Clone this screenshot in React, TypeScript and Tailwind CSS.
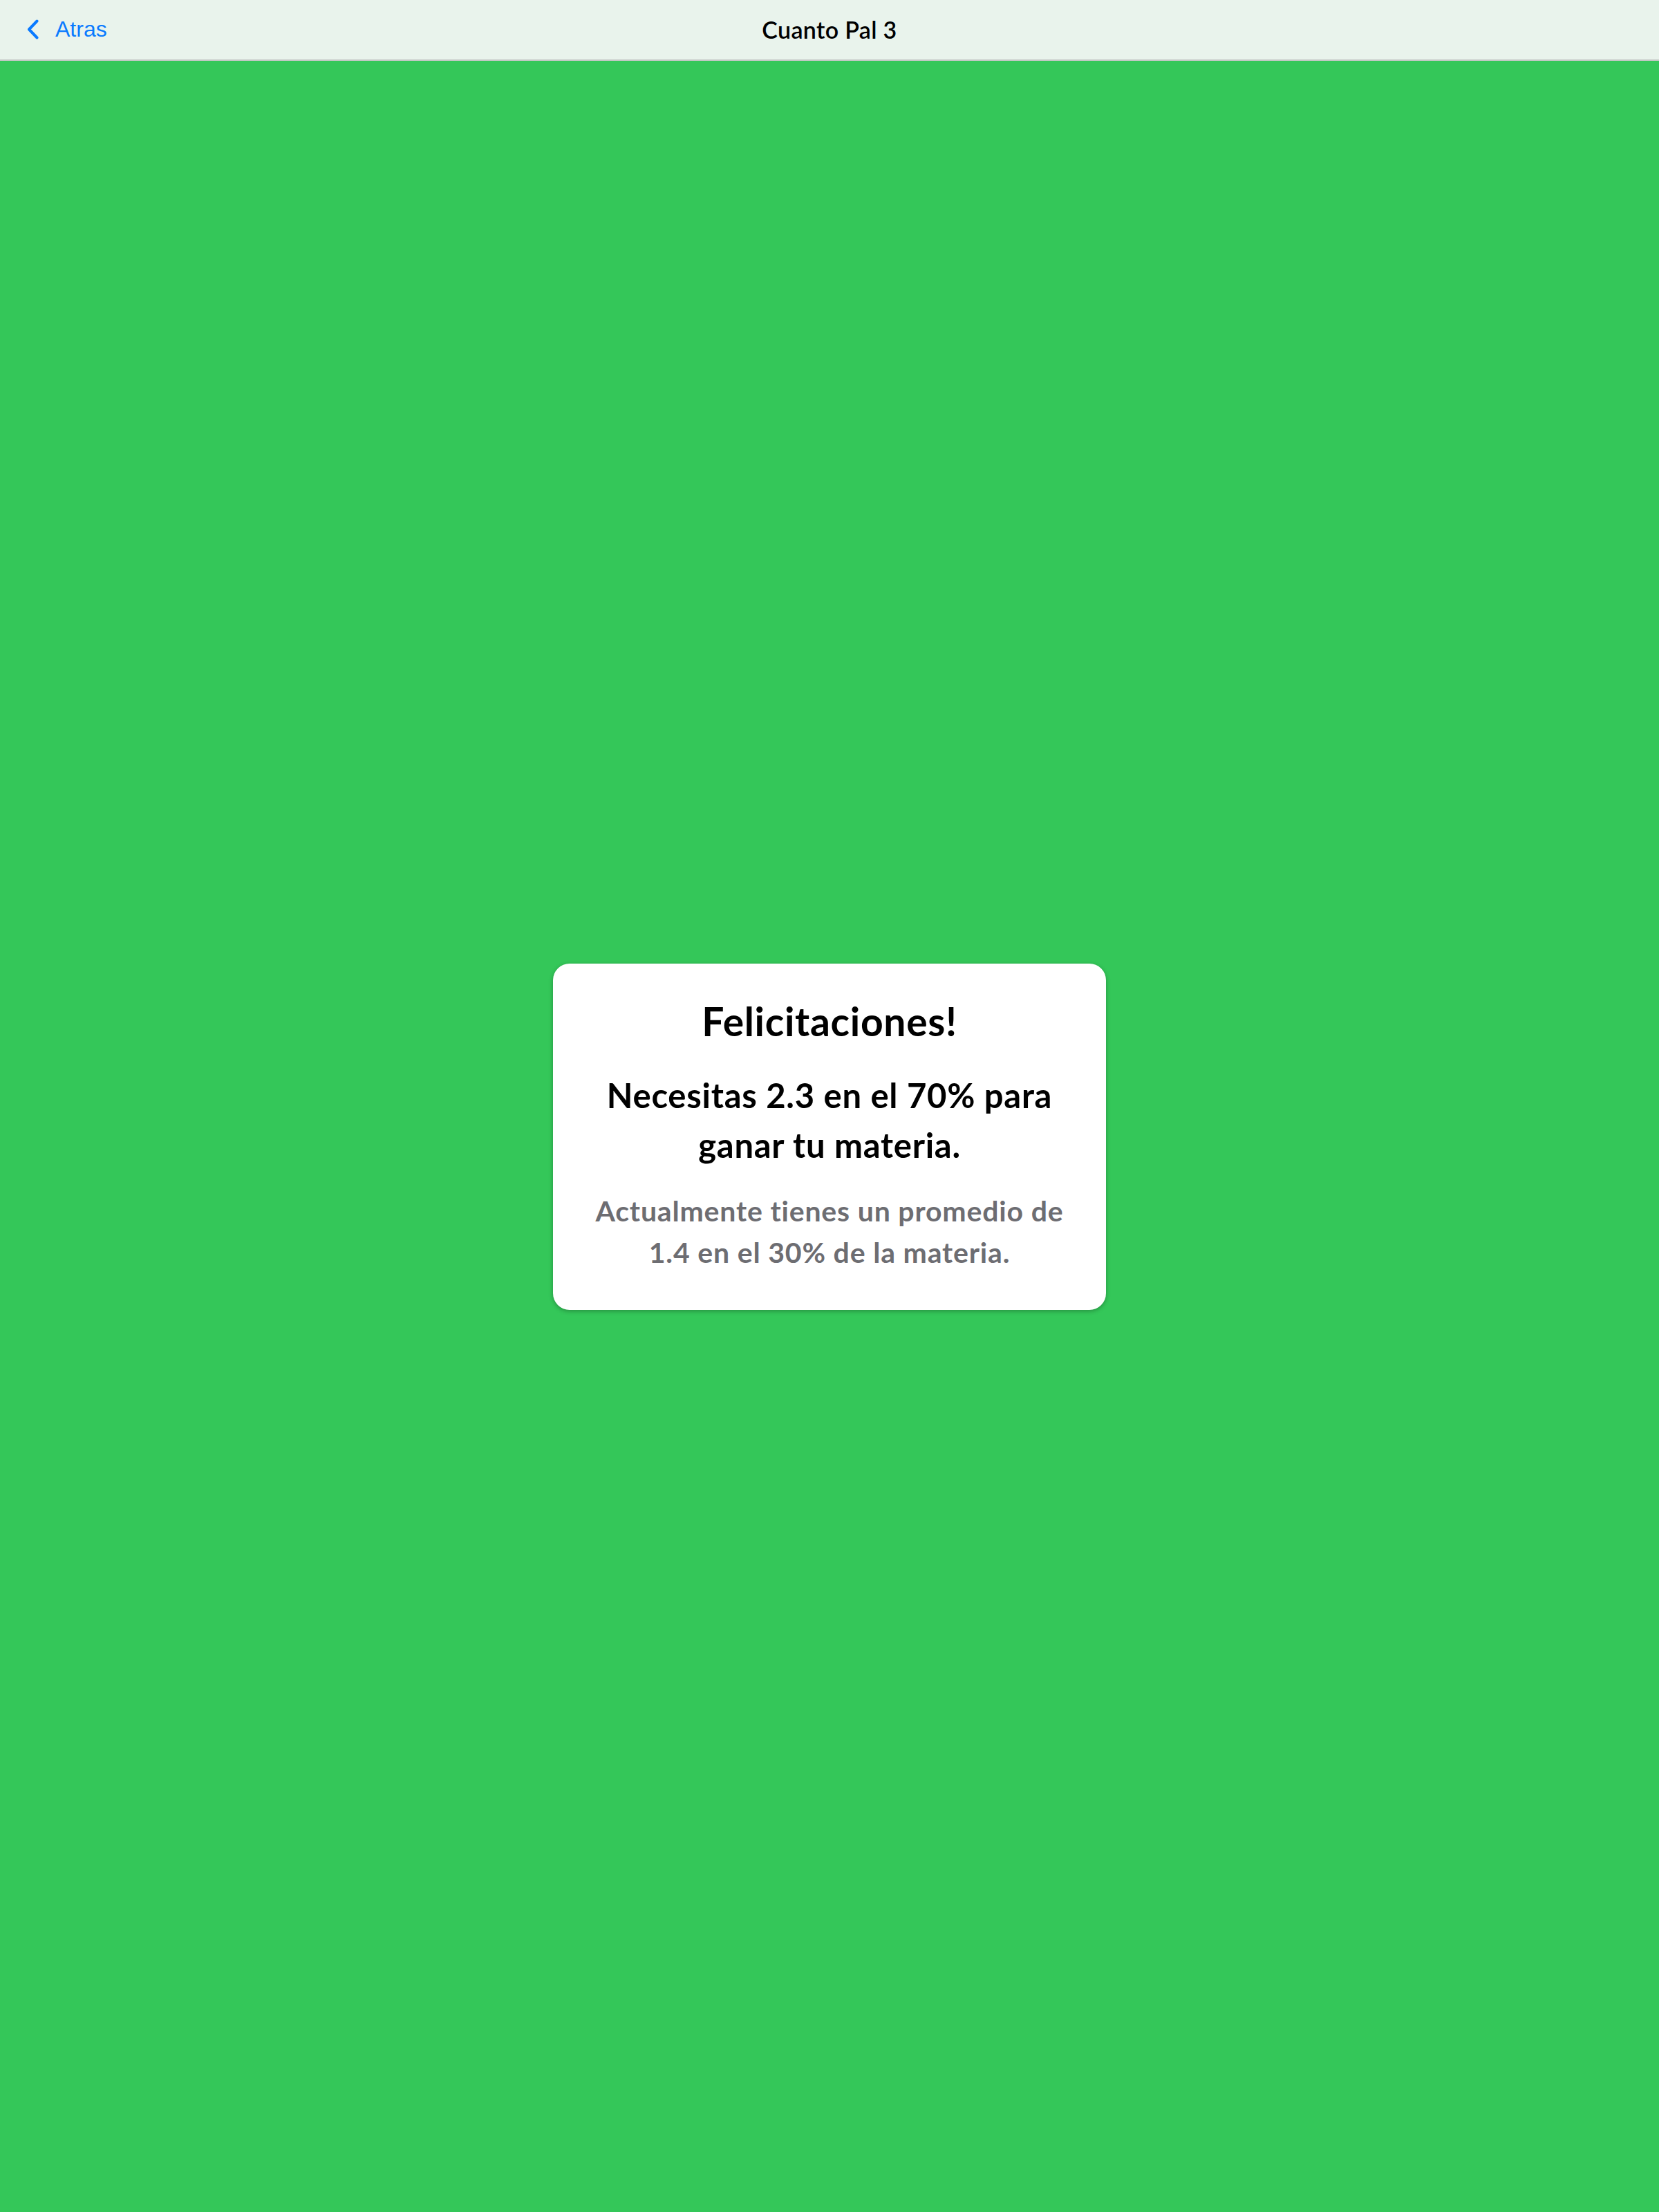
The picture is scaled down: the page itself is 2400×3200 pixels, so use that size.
import React from "react";

export default function App() {
  return (
    <div className="flex min-h-screen flex-col bg-[#34c759]" style={{ fontFamily: "Lato, 'Open Sans', sans-serif" }}>
      <header className="relative flex h-[88px] shrink-0 items-center justify-center border-b-2 border-[#c4c8c5] bg-[#e9f3ec]">
        <button className="absolute left-[39px] top-0 flex h-[84px] items-center gap-[24px] text-[#0a7aff]">
          <svg width="17" height="29" viewBox="0 0 17 29" fill="none">
            <path d="M14.5 2.5L3 14.5L14.5 26.5" stroke="#0a7aff" strokeWidth="4" strokeLinecap="round" strokeLinejoin="round" />
          </svg>
          <span className="text-[32px] leading-none" style={{ fontFamily: "'Liberation Sans', Arial, sans-serif" }}>Atras</span>
        </button>
        <h1 className="text-[34px] font-semibold leading-none tracking-[0.01em] text-black">Cuanto Pal 3</h1>
      </header>
      <main className="flex flex-1 items-center justify-center">
        <div className="w-[800px] rounded-[24px] bg-white px-[30px] pb-[53px] pt-[50px] text-center shadow-[0_2px_6px_rgba(0,0,0,0.28)]">
          <h2 className="text-[57px] font-bold leading-[67px] tracking-[0.012em] text-black">Felicitaciones!</h2>
          <p className="mt-[37px] text-[49px] font-bold leading-[72px] tracking-[0.015em] text-black">
            Necesitas 2.3 en el 70% para
            <br />
            ganar tu materia.
          </p>
          <p className="mt-[30px] text-[41px] font-bold leading-[60px] tracking-[0.02em] text-[#6d6d72]">
            Actualmente tienes un promedio de
            <br />
            1.4 en el 30% de la materia.
          </p>
        </div>
      </main>
    </div>
  );
}
